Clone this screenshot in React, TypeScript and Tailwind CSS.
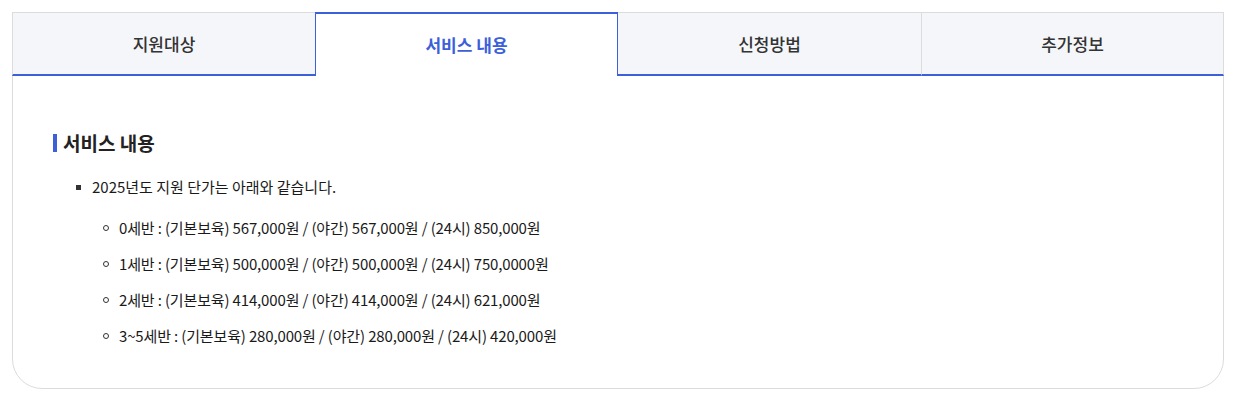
const TABS = ['지원대상', '서비스 내용', '신청방법', '추가정보'];

const RATES = [
  '0세반 : (기본보육) 567,000원 / (야간) 567,000원 / (24시) 850,000원',
  '1세반 : (기본보육) 500,000원 / (야간) 500,000원 / (24시) 750,0000원',
  '2세반 : (기본보육) 414,000원 / (야간) 414,000원 / (24시) 621,000원',
  '3~5세반 : (기본보육) 280,000원 / (야간) 280,000원 / (24시) 420,000원',
];

export default function App() {
  return (
    <div
      className="bg-white w-[1237px] h-[399px] pt-[12px] pl-[12px]"
      style={{ fontFamily: '"Noto Sans CJK KR", "Noto Sans", sans-serif' }}
    >
      <div className="w-[1212px] h-[377px] border border-[#dcdcdc] rounded-b-[30px] flex flex-col">
        <div className="grid grid-cols-4 h-[64px] -mt-px -mx-px">
          {TABS.map((tab, i) => {
            const active = i === 1;
            return (
              <div
                key={tab}
                className={
                  active
                    ? 'flex items-center justify-center bg-white border-t-2 border-x border-[#3d5fd9] text-[#3d5fd9] text-[17px] font-bold'
                    : `flex items-center justify-center bg-[#f5f6fa] border-t border-[#dcdcdc] border-b-2 border-b-[#3d5fd9] text-[#333] text-[17px] font-medium ${i === 3 ? 'border-l border-r' : ''} ${i === 0 ? 'border-l' : ''}`
                }
              >
                {tab}
              </div>
            );
          })}
        </div>
        <div className="pl-[40px] pt-[57px]">
          <h3 className="flex items-center gap-[6px] text-[19px] font-bold text-[#222] leading-none">
            <span className="w-[4px] h-[18px] bg-[#3d5fd9]" />
            서비스 내용
          </h3>
          <ul className="mt-[24px] pl-[23px] text-[15px] text-[#1a1a1a]">
            <li className="flex items-center gap-[11px] leading-[22px]">
              <span className="w-[5px] h-[5px] bg-[#333] shrink-0" />
              2025년도 지원 단가는 아래와 같습니다.
            </li>
            <li className="pl-[27px] mt-[19px] flex flex-col gap-[14px]">
              {RATES.map((r) => (
                <div key={r} className="flex items-center gap-[10px] leading-[22px] tracking-[-0.15px]">
                  <span className="w-[6px] h-[6px] rounded-full border border-[#333] shrink-0" />
                  {r}
                </div>
              ))}
            </li>
          </ul>
        </div>
      </div>
    </div>
  );
}
